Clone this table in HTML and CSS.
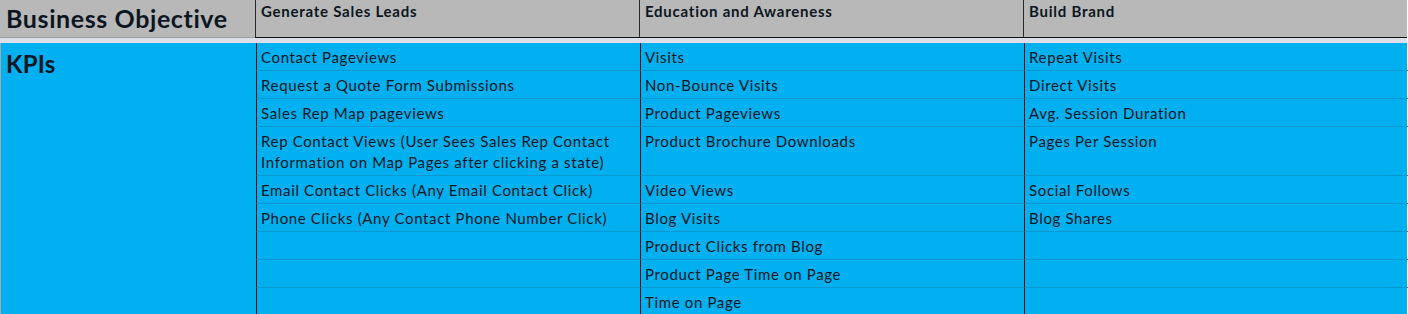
FILE: index.html
```html
<!DOCTYPE html>
<html>
<head>
<meta charset="utf-8">
<link rel="stylesheet" href="styles.css">
</head>
<body>
<div class="sheet">
  <div class="head">
    <div class="hcell first big">Business Objective</div>
    <div class="hcell col">Generate Sales Leads</div>
    <div class="hcell col">Education and Awareness</div>
    <div class="hcell col">Build Brand</div>
  </div>
  <div class="gap"></div>
  <div class="body">
    <div class="kpi big">KPIs</div>

    <div class="c">Contact Pageviews</div>
    <div class="c">Visits</div>
    <div class="c">Repeat Visits</div>

    <div class="c">Request a Quote Form Submissions</div>
    <div class="c">Non-Bounce Visits</div>
    <div class="c">Direct Visits</div>

    <div class="c">Sales Rep Map pageviews</div>
    <div class="c">Product Pageviews</div>
    <div class="c">Avg. Session Duration</div>

    <div class="c">Rep Contact Views (User Sees Sales Rep Contact Information on Map Pages after clicking a state)</div>
    <div class="c">Product Brochure Downloads</div>
    <div class="c">Pages Per Session</div>

    <div class="c">Email Contact Clicks (Any Email Contact Click)</div>
    <div class="c">Video Views</div>
    <div class="c">Social Follows</div>

    <div class="c">Phone Clicks (Any Contact Phone Number Click)</div>
    <div class="c">Blog Visits</div>
    <div class="c">Blog Shares</div>

    <div class="c"></div>
    <div class="c">Product Clicks from Blog</div>
    <div class="c"></div>

    <div class="c"></div>
    <div class="c">Product Page Time on Page</div>
    <div class="c"></div>

    <div class="c"></div>
    <div class="c">Time on Page</div>
    <div class="c"></div>
  </div>
</div>
</body>
</html>
```
FILE: styles.css
```css
html, body {
  margin: 0;
  padding: 0;
  background: #ffffff;
  overflow: hidden;
}
.sheet {
  width: 1407px;
  font-family: Lato, "Liberation Sans", sans-serif;
  color: #0b1622;
}
.head {
  display: grid;
  grid-template-columns: 255px 384px 384px 384px;
  height: 37px;
  background: #b8b8b8;
  border-bottom: 1px solid #111;
}
.hcell {
  box-sizing: border-box;
  padding-left: 5px;
}
.hcell.first {
  border-bottom: 1px solid #9c9c9c;
  margin-bottom: -1px;
  padding-left: 6px;
  padding-top: 3px;
  font-size: 25px;
  letter-spacing: 0.6px;
}
.hcell.col {
  border-left: 1px solid #2a2a2a;
  font-weight: 700;
  font-size: 15px;
  letter-spacing: 0.75px;
  padding-top: 2px;
}
.big {
  font-weight: 700;
  font-size: 24px;
  line-height: 30px;
}
.gap {
  height: 5px;
  background: #dcdee8;
}
.body {
  display: grid;
  grid-template-columns: 255px 384px 384px 384px;
  grid-template-rows: 28px 28px 28px 49px 28px 28px 28px 28px 28px;
  background: #00b0f0;
  border-left: 1px solid #a8a8a8;
  box-sizing: border-box;
}
.kpi {
  grid-row: 1 / span 9;
  padding-left: 5px;
  padding-top: 6px;
  letter-spacing: 0.2px;
}
.c {
  box-sizing: border-box;
  border-left: 1px solid #111;
  border-bottom: 1px solid #0f98d0;
  padding: 4px 8px 0 4px;
  font-size: 15px;
  line-height: 21px;
  letter-spacing: 0.65px;
}
```
